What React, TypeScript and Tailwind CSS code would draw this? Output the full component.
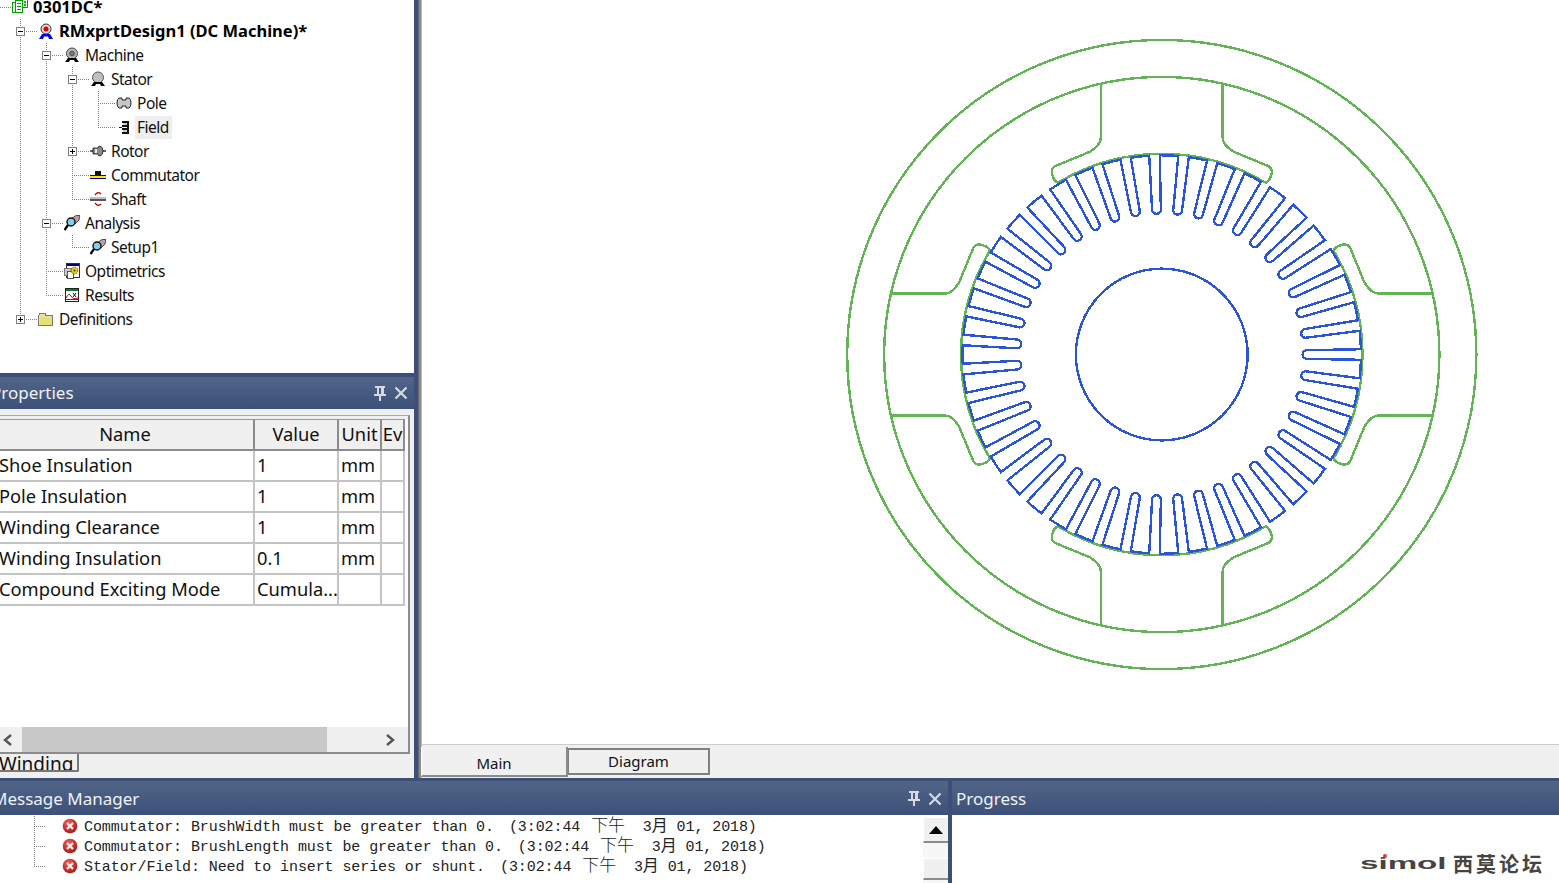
import React from "react";

const CX = 740;
const CY = 355;

function rotorPath() {
  const n = 43;
  const R = 199.5;
  const B = 141;
  const h1 = 5.3;
  const h2 = 4.4;
  let d = "";
  for (let k = 0; k < n; k++) {
    const a = (k * 2 * Math.PI) / n;
    const pt = (r: number, s: number) =>
      `${(CX + r * Math.cos(a) - s * Math.sin(a)).toFixed(2)} ${(CY + r * Math.sin(a) + s * Math.cos(a)).toFixed(2)}`;
    const rr = Math.sqrt(R * R - h1 * h1);
    d += `${k === 0 ? "M" : `A${R} ${R} 0 0 1`} ${pt(rr, -h1)} L ${pt(B + h2, -h2)} A ${h2} ${h2} 0 0 0 ${pt(B + h2, h2)} L ${pt(rr, h1)} `;
  }
  const x = CX + Math.sqrt(R * R - h1 * h1);
  const y = CY - h1;
  d += `A${R} ${R} 0 0 1 ${x.toFixed(2)} ${y.toFixed(2)} Z`;
  return d;
}

const POLE =
  "M-61 -271.2 V-217 Q-61 -210 -72 -203 L-106 -189 Q-111 -187 -110 -181 L-109 -178 Q-108 -174 -104 -172 A201 201 0 0 1 104 -172 Q108 -174 109 -178 L110 -181 Q111 -187 106 -189 L72 -203 Q61 -210 61 -217 V-271.2";

function Machine() {
  return (
    <svg viewBox="0 0 1137 745" className="w-full h-full block bg-white" fill="none" shapeRendering="crispEdges">
      <g stroke="#62b455" strokeWidth="2.4">
        <circle cx={CX} cy={CY} r="315" />
        <circle cx={CX} cy={CY} r="278" />
        {[0, 90, 180, 270].map((deg) => (
          <path key={deg} d={POLE} transform={`translate(${CX} ${CY}) rotate(${deg})`} />
        ))}
      </g>
      <g stroke="#2a55d8" strokeWidth="2.4">
        <path d={rotorPath()} />
        <circle cx={CX} cy={CY} r="86" />
      </g>
    </svg>
  );
}

type GuideKind = "v" | "T" | "L" | "-T" | "+T" | "+L";

function Guide({ kind }: { kind: GuideKind }) {
  const isLast = kind === "L" || kind === "+L";
  const box = kind === "-T" || kind === "+T" || kind === "+L";
  const plus = kind === "+T" || kind === "+L";
  return (
    <svg width="26" height="24" viewBox="0 0 26 24" className="shrink-0 overflow-visible" shapeRendering="crispEdges">
      <line x1="13.5" y1="0" x2="13.5" y2={isLast ? 12 : 24} stroke="#808080" strokeDasharray="1 1" />
      {kind !== "v" && <line x1="13" y1="12.5" x2="30" y2="12.5" stroke="#808080" strokeDasharray="1 1" />}
      {box && (
        <g>
          <rect x="9.5" y="8.5" width="8" height="8" fill="#fff" stroke="#808080" />
          <line x1="11" y1="12.5" x2="16" y2="12.5" stroke="#000" />
          {plus && <line x1="13.5" y1="10" x2="13.5" y2="15" stroke="#000" />}
        </g>
      )}
    </svg>
  );
}

const S = ({ children }: { children: React.ReactNode }) => (
  <svg width="16" height="16" viewBox="0 0 16 16" className="block" shapeRendering="crispEdges">
    {children}
  </svg>
);

const Feet = () => <path d="M1 15 L4 11 H12 L15 15 H11 L10 13 H6 L5 15 Z" fill="#000" />;

function IconProject() {
  return (
    <S>
      <rect x="0.5" y="3.5" width="5" height="10" fill="#fff" stroke="#00a000" />
      <rect x="3.5" y="1.5" width="7" height="12" fill="#fff" stroke="#00a000" />
      <rect x="5" y="4" width="4" height="1" fill="#00a000" />
      <rect x="5" y="7" width="4" height="1" fill="#00a000" />
      <rect x="5" y="10" width="4" height="1" fill="#00a000" />
      <rect x="10.5" y="0.5" width="5" height="8" fill="#fff" stroke="#00a000" />
      <rect x="12" y="2" width="2" height="2" fill="#00c000" />
      <rect x="12" y="5" width="2" height="2" fill="#00c000" />
    </S>
  );
}
function IconDesign() {
  return (
    <svg width="16" height="16" viewBox="0 0 16 16" className="block">
      <circle cx="8" cy="6" r="5" fill="#d8d8d8" stroke="#333" />
      <circle cx="8" cy="6" r="2.5" fill="#e00000" />
      <path d="M1 16 L4 11 H12 L15 16 H11 L10 13.5 H6 L5 16 Z" fill="#0000e0" />
    </svg>
  );
}
function IconMachine() {
  return (
    <svg width="16" height="16" viewBox="0 0 16 16" className="block">
      <circle cx="8" cy="6.5" r="5.5" fill="#b8b8b8" stroke="#444" />
      <circle cx="8" cy="6.5" r="2.5" fill="#777" stroke="#333" strokeWidth="0.6" />
      <Feet />
    </svg>
  );
}
function IconStator() {
  return (
    <svg width="16" height="16" viewBox="0 0 16 16" className="block">
      <circle cx="8" cy="6.5" r="5.5" fill="#c0c0c0" stroke="#555" />
      <Feet />
    </svg>
  );
}
function IconPole() {
  return (
    <svg width="16" height="16" viewBox="0 0 16 16" className="block">
      <path d="M3 3 H6 V5 H10 V3 H13 Q15 4 15 8 Q15 12 13 13 H10 V11 H6 V13 H3 Q1 12 1 8 Q1 4 3 3 Z" fill="#c8c8c8" stroke="#222" />
    </svg>
  );
}
function IconField() {
  return (
    <S>
      <rect x="11" y="2" width="2" height="13" fill="#111" />
      <rect x="6" y="2" width="6" height="2" fill="#111" />
      <rect x="6" y="6" width="6" height="2" fill="#111" />
      <rect x="6" y="9" width="6" height="2" fill="#111" />
      <rect x="6" y="13" width="6" height="2" fill="#111" />
      <rect x="7" y="4" width="4" height="2" fill="#ccc" />
      <rect x="7" y="11" width="4" height="2" fill="#ccc" />
      <rect x="3" y="8" width="3" height="1" fill="#111" />
    </S>
  );
}
function IconRotor() {
  return (
    <svg width="16" height="16" viewBox="0 0 16 16" className="block">
      <path d="M0 8 H3 M13 8 H16" stroke="#333" strokeWidth="1.5" />
      <path d="M3 5 H8 Q8 3 10 3 Q13 4 13 8 Q13 12 10 13 Q8 13 8 11 H3 Z" fill="#8a8a8a" stroke="#111" strokeWidth="0.8" />
      <rect x="5" y="6" width="2" height="4" fill="#e8e8e8" />
    </svg>
  );
}
function IconCommutator() {
  return (
    <S>
      <rect x="5" y="4" width="6" height="4" fill="#111" />
      <rect x="0" y="8" width="16" height="1" fill="#0000d0" />
      <rect x="0" y="9" width="16" height="2" fill="#ffe800" />
      <rect x="0" y="11" width="16" height="1" fill="#0000d0" />
    </S>
  );
}
function IconShaft() {
  return (
    <svg width="16" height="16" viewBox="0 0 16 16" className="block">
      <rect x="0" y="6" width="16" height="2" fill="#c0c0c0" />
      <rect x="0" y="8" width="16" height="2" fill="#555" />
      <path d="M5 4 Q8 0 11 3" fill="none" stroke="#d00000" strokeWidth="1.3" />
      <path d="M5 12 Q8 16 11 13" fill="none" stroke="#d00000" strokeWidth="1.3" />
    </svg>
  );
}
function IconAnalysis() {
  return (
    <svg width="16" height="16" viewBox="0 0 16 16" className="block">
      <path d="M7 4 L12 0.5 H16 L15 5 L11 9 Z" fill="#a8a8a8" stroke="#7a1010" strokeWidth="0.8" />
      <line x1="4" y1="10" x2="0.5" y2="15" stroke="#000" strokeWidth="2.2" />
      <circle cx="7" cy="7" r="4" fill="#7fd0e8" stroke="#111" strokeWidth="1.4" />
    </svg>
  );
}
function IconOptimetrics() {
  return (
    <svg width="16" height="16" viewBox="0 0 16 16" className="block">
      <rect x="2.5" y="0.5" width="13" height="14" fill="#fff" stroke="#333" />
      <rect x="3" y="1" width="12" height="2" fill="#000080" />
      <rect x="0.5" y="5.5" width="7" height="7" fill="#ccc" stroke="#777" />
      <rect x="3.5" y="8.5" width="6" height="7" fill="#fff" stroke="#555" />
      <circle cx="10.5" cy="7.5" r="3.3" fill="#f5d000" stroke="#6a5a00" strokeDasharray="1.5 0.7" />
      <circle cx="10.5" cy="7.5" r="1" fill="#333" />
    </svg>
  );
}
function IconResults() {
  return (
    <svg width="16" height="16" viewBox="0 0 16 16" className="block">
      <rect x="1.5" y="1.5" width="13" height="13" fill="#fff" stroke="#222" />
      <rect x="2" y="2" width="12" height="2" fill="#0a7a30" />
      <path d="M2 11 Q5 5 7 9 T14 11" fill="none" stroke="#d00000" />
      <path d="M9 6 L12 10 M12 6 L9 10" stroke="#111" />
      <line x1="2" y1="12.5" x2="14" y2="12.5" stroke="#d00000" />
    </svg>
  );
}
function IconFolder() {
  return (
    <S>
      <path d="M0.5 4.5 L2 2.5 H7 L8 4.5 H14.5 V14.5 H0.5 Z" fill="#e8e4a8" stroke="#777" />
      <rect x="2" y="6" width="12" height="8" fill="#e6e070" />
    </S>
  );
}

type Row = {
  label: string;
  guides: GuideKind[];
  icon: React.ReactNode;
  bold?: boolean;
  selected?: boolean;
  root?: boolean;
};

const rows: Row[] = [
  { label: "0301DC*", guides: [], icon: <IconProject />, bold: true, root: true },
  { label: "RMxprtDesign1 (DC Machine)*", guides: ["-T"], icon: <IconDesign />, bold: true },
  { label: "Machine", guides: ["v", "-T"], icon: <IconMachine /> },
  { label: "Stator", guides: ["v", "v", "-T"], icon: <IconStator /> },
  { label: "Pole", guides: ["v", "v", "v", "T"], icon: <IconPole /> },
  { label: "Field", guides: ["v", "v", "v", "L"], icon: <IconField />, selected: true },
  { label: "Rotor", guides: ["v", "v", "+T"], icon: <IconRotor /> },
  { label: "Commutator", guides: ["v", "v", "T"], icon: <IconCommutator /> },
  { label: "Shaft", guides: ["v", "v", "L"], icon: <IconShaft /> },
  { label: "Analysis", guides: ["v", "-T"], icon: <IconAnalysis /> },
  { label: "Setup1", guides: ["v", "v", "L"], icon: <IconAnalysis /> },
  { label: "Optimetrics", guides: ["v", "T"], icon: <IconOptimetrics /> },
  { label: "Results", guides: ["v", "L"], icon: <IconResults /> },
  { label: "Definitions", guides: ["+L"], icon: <IconFolder /> },
];

function Tree() {
  return (
    <div className="h-[373px] bg-white overflow-hidden">
      <div className="-mt-[5px]">
        {rows.map((r) => (
          <div key={r.label} className="flex items-center h-[24px] whitespace-nowrap">
            <svg width="7" height="24" className="shrink-0 overflow-visible" shapeRendering="crispEdges">
              {r.root && <line x1="0" y1="12.5" x2="12" y2="12.5" stroke="#808080" strokeDasharray="1 1" />}
            </svg>
            {r.guides.map((g, i) => (
              <Guide key={i} kind={g} />
            ))}
            <div className="w-[26px] shrink-0 flex items-center justify-center relative">{r.icon}</div>
            {r.bold ? (
              <span className="text-[16.5px] font-bold text-black [font-family:'Noto_Sans',sans-serif] leading-[24px]">{r.label}</span>
            ) : r.selected ? (
              <span className="text-[15.5px] tracking-[-0.5px] text-[#111] bg-[#eeeeee] -ml-[2px] pl-[2px] pr-[3px] [font-family:'Noto_Sans',sans-serif] leading-[23px]">{r.label}</span>
            ) : (
              <span className="text-[15.5px] tracking-[-0.5px] text-[#111] [font-family:'Noto_Sans',sans-serif] leading-[23px]">{r.label}</span>
            )}
          </div>
        ))}
      </div>
    </div>
  );
}

function PinClose() {
  return (
    <div className="flex items-center gap-[8px]">
      <svg width="12" height="15" viewBox="0 0 12 15" shapeRendering="crispEdges">
        <rect x="1" y="0" width="10" height="2" fill="#d5d9e2" />
        <rect x="3" y="2" width="2" height="6" fill="#d5d9e2" />
        <rect x="7" y="2" width="3" height="6" fill="#d5d9e2" />
        <rect x="0" y="8" width="12" height="2" fill="#d5d9e2" />
        <rect x="5" y="10" width="2" height="5" fill="#d5d9e2" />
      </svg>
      <svg width="14" height="14" viewBox="0 0 14 14">
        <path d="M1.5 1.5 L12.5 12.5 M12.5 1.5 L1.5 12.5" stroke="#d5d9e2" strokeWidth="2.2" />
      </svg>
    </div>
  );
}

const HEADER = "bg-gradient-to-b from-[#516588] to-[#3d5079] text-[#f0f2f6] text-[17px] [font-family:'Noto_Sans',sans-serif]";

const tableRows = [
  ["Shoe Insulation", "1", "mm"],
  ["Pole Insulation", "1", "mm"],
  ["Winding Clearance", "1", "mm"],
  ["Winding Insulation", "0.1", "mm"],
  ["Compound Exciting Mode", "Cumula...", ""],
];

const COLS = "grid grid-cols-[258px_84px_43px_23px]";
const HEAD_CELL =
  "h-[32px] bg-[#f0f0f0] border-t border-t-[#999] border-r-2 border-r-[#8c8c8c] border-b-2 border-b-[#8c8c8c] flex items-center justify-center overflow-hidden whitespace-nowrap";
const CELL = "h-[31px] border-r-2 border-b-2 border-[#c4c4c4] flex items-center pl-[2px] pb-px overflow-hidden whitespace-nowrap";

function Properties() {
  return (
    <div className="h-[401px] flex flex-col">
      <div className={`h-[32px] flex items-center justify-between pr-[6px] overflow-hidden whitespace-nowrap ${HEADER}`}>
        <span className="-ml-[9px]">Properties</span>
        <PinClose />
      </div>
      <div className="flex-1 min-h-0 bg-[#f0f0f0] flex flex-col pt-[6px]">
        <div className="h-[339px] mr-[4px] border-t border-r-2 border-b-2 border-t-[#aaa] border-r-[#8c8c8c] border-b-[#8c8c8c] flex flex-col overflow-hidden pt-[3px]">
          <div className="flex-1 min-h-0 bg-white pr-[3px] overflow-hidden text-[18.3px] text-[#111] [font-family:'Noto_Sans',sans-serif] leading-none">
            <div className={`${COLS} -ml-[3px] w-[408px]`}>
              {["Name", "Value", "Unit", "Ev"].map((h) => (
                <div key={h} className={HEAD_CELL}>
                  {h}
                </div>
              ))}
              {tableRows.map((r) => (
                <React.Fragment key={r[0]}>
                  <div className={CELL}>{r[0]}</div>
                  <div className={CELL}>{r[1]}</div>
                  <div className={CELL}>{r[2]}</div>
                  <div className={CELL}></div>
                </React.Fragment>
              ))}
            </div>
          </div>
          <div className="h-[25px] shrink-0 bg-[#f0f0f0] flex items-center">
            <div className="w-[22px] shrink-0 flex justify-start pl-[3px]">
              <svg width="10" height="12" viewBox="0 0 10 12">
                <path d="M8 1 L2 6 L8 11" fill="none" stroke="#555" strokeWidth="2.4" />
              </svg>
            </div>
            <div className="w-[305px] h-full bg-[#c8c8c8]" />
            <div className="w-[57px]" />
            <div className="w-[12px] shrink-0 flex justify-center">
              <svg width="10" height="12" viewBox="0 0 10 12">
                <path d="M2 1 L8 6 L2 11" fill="none" stroke="#555" strokeWidth="2.4" />
              </svg>
            </div>
          </div>
        </div>
        <div className="h-[18px] overflow-hidden">
          <div className="w-[79px] h-[18px] border-r-2 border-b-2 border-[#777] rounded-br-[2px] overflow-hidden">
            <div className="text-[19px] leading-[21px] -ml-px text-[#111] [font-family:'Noto_Sans',sans-serif]">Winding</div>
          </div>
        </div>
      </div>
    </div>
  );
}

function ErrorIcon() {
  return (
    <svg width="16" height="16" viewBox="0 0 16 16" className="shrink-0">
      <defs>
        <radialGradient id="err" cx="40%" cy="30%" r="80%">
          <stop offset="0%" stopColor="#f06060" />
          <stop offset="100%" stopColor="#a80c0c" />
        </radialGradient>
      </defs>
      <circle cx="8" cy="8" r="7.3" fill="url(#err)" />
      <path d="M5 5 L11 11 M11 5 L5 11" stroke="#f4f4f4" strokeWidth="2.2" />
    </svg>
  );
}

const messages = [
  "Commutator: BrushWidth must be greater than 0.",
  "Commutator: BrushLength must be greater than 0.",
  "Stator/Field: Need to insert series or shunt.",
];

function Messages() {
  return (
    <div className="w-[948px] flex flex-col">
      <div className={`h-[34px] flex items-center justify-between pr-[6px] pt-px overflow-hidden whitespace-nowrap ${HEADER}`}>
        <span className="-ml-[8px]">Message Manager</span>
        <PinClose />
      </div>
      <div className="flex-1 min-h-0 flex bg-white">
        <div className="flex-1 pt-px overflow-hidden">
          {messages.map((text, i) => (
            <div key={i} className="h-[20px] flex items-center pl-[34px] whitespace-nowrap">
              <svg width="28" height="20" className="shrink-0" shapeRendering="crispEdges">
                <line x1="0.5" y1="0" x2="0.5" y2={i === 2 ? 11 : 20} stroke="#808080" strokeDasharray="1 1" />
                <line x1="0" y1="10.5" x2="12" y2="10.5" stroke="#808080" strokeDasharray="1 1" />
              </svg>
              <ErrorIcon />
              <span className="ml-[6px] mt-[3px] text-[15px] tracking-[-0.09px] leading-[20px] text-[#222] [font-family:'Liberation_Mono','Noto_Sans_CJK_SC',monospace] whitespace-pre">
                {text}
                <span className="ml-[15px]">(3:02:44 </span>
                <span className="text-[17px] ml-[2px] font-light">下午</span>
                <span>  3</span>
                <span className="text-[16px]">月</span>
                <span> 01, 2018)</span>
              </span>
            </div>
          ))}
        </div>
        <div className="w-[25px] shrink-0 flex flex-col pt-[2px]">
          <div className="h-[26px] shrink-0 bg-[#f0f0f0] border-l border-t border-l-white border-t-white border-b-2 border-b-[#8c8c8c] flex items-center justify-center">
            <svg width="14" height="8" viewBox="0 0 14 8">
              <path d="M7 0 L14 8 H0 Z" fill="#000" />
            </svg>
          </div>
          <div className="h-[15px] shrink-0 bg-[#f7f7f7]" />
          <div className="flex-1 bg-[#f0f0f0] border-l border-t border-l-white border-t-white border-b-2 border-b-[#8c8c8c]" />
          <div className="h-[3px] shrink-0 bg-[#f7f7f7]" />
        </div>
      </div>
    </div>
  );
}

function Logo() {
  return (
    <div className="flex items-center text-[#444] whitespace-nowrap">
      <div className="relative w-[93px] h-[18px] shrink-0">
        <span className="block font-bold text-[17px] leading-[18px] [font-family:'Liberation_Sans',sans-serif] origin-left scale-x-[1.95]">simol</span>
        <span className="absolute left-[23px] -top-px w-[4px] h-[4px] rounded-full bg-[#e23a2e]" />
      </div>
      <span className="text-[20px] font-bold leading-[18px] tracking-[3px] [font-family:'Noto_Sans_CJK_SC',sans-serif]">西莫论坛</span>
    </div>
  );
}

export default function App() {
  return (
    <div className="w-[1559px] h-[883px] overflow-hidden flex flex-col bg-[#3b4f78]">
      <div className="h-[778px] flex shrink-0">
        <div className="w-[414px] shrink-0 flex flex-col">
          <Tree />
          <div className="h-[4px] bg-[#3b4f78] shrink-0" />
          <Properties />
        </div>
        <div className="w-[4px] shrink-0 bg-[#3b4f78]" />
        <div className="w-[4px] shrink-0 bg-[#8a8a8a] border-l border-[#666] border-r border-r-[#bbb]" />
        <div className="flex-1 min-w-0 flex flex-col bg-[#f0f0f0]">
          <div className="h-[745px] shrink-0 bg-white border-b border-[#ccc]">
            <Machine />
          </div>
          <div className="flex-1 flex items-start pt-[2px] text-[15px] text-[#111] [font-family:'Noto_Sans',sans-serif]">
            <div className="w-[147px] h-[30px] bg-[#f0f0f0] border-l border-l-white border-r-2 border-r-[#8c8c8c] border-b-2 border-b-[#8c8c8c] flex items-end justify-center pb-px -ml-[1px]">
              Main
            </div>
            <div className="w-[142px] h-[27px] mt-[1px] bg-[#f0f0f0] border-t-2 border-t-[#808080] border-r-2 border-r-[#808080] border-l border-l-[#808080] border-b-2 border-b-[#808080] flex items-center justify-center">
              Diagram
            </div>
          </div>
        </div>
      </div>
      <div className="h-[3px] shrink-0 bg-[#3b4f78]" />
      <div className="flex-1 min-h-0 flex">
        <Messages />
        <div className="w-[4px] shrink-0 bg-[#3b4f78]" />
        <div className="flex-1 min-w-0 flex flex-col">
          <div className={`h-[34px] flex items-center pl-[4px] pt-px ${HEADER}`}>Progress</div>
          <div className="flex-1 min-h-0 bg-white flex items-end justify-end pr-[14px] pb-[10px]">
            <Logo />
          </div>
        </div>
      </div>
    </div>
  );
}
